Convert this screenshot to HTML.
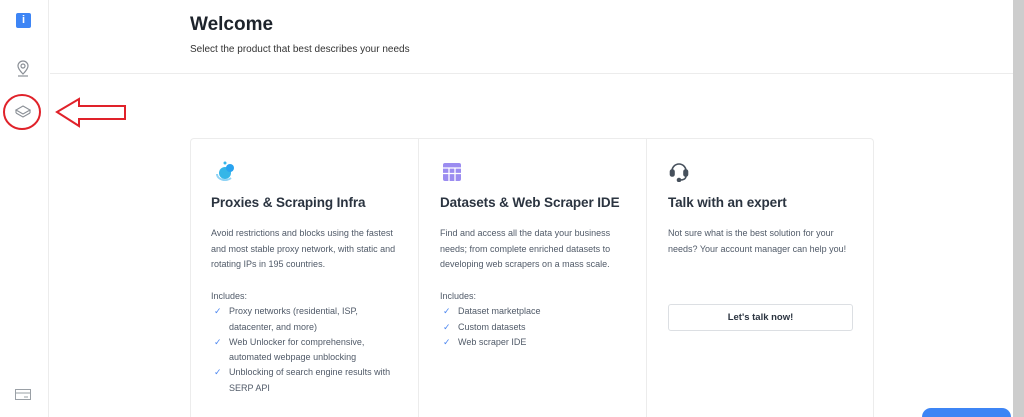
<!DOCTYPE html>
<html><head><meta charset="utf-8"><style>
*{margin:0;padding:0;box-sizing:border-box}
html{width:1024px;height:417px;overflow:hidden}
body{width:1024px;height:417px;overflow:hidden;background:#fff;font-family:"Liberation Sans",sans-serif;position:relative;color:#2b3440}
.abs{position:absolute}
.sb{left:0;top:0;width:49px;height:417px;border-right:1px solid #ececec}
.hline{left:50px;top:73px;width:963px;height:1px;background:#ececec}
.scroll{left:1013px;top:0;width:11px;height:417px;background:#cdcdcd}
.cards{left:190px;top:138px;width:684px;height:279px;border:1px solid #ececec;border-bottom:none;border-radius:4px 4px 0 0}
.div{top:138px;width:1px;height:279px;background:#ececec}
h3{position:absolute;font-size:13.5px;font-weight:600;color:#2b3440;white-space:nowrap;letter-spacing:-0.1px}
.p{position:absolute;font-size:9px;line-height:15.5px;color:#505a68;white-space:nowrap}
.ck{color:#4b86f0;display:inline-block;width:18px;font-size:9px;padding-left:3px}
</style></head><body>
<div class="abs sb"></div>
<div class="abs" style="left:16px;top:13px;width:15px;height:15px;background:#3d85f5;border-radius:2px;color:#fff;font-size:11px;font-weight:bold;text-align:center;line-height:15px">i</div>
<svg class="abs" style="left:15px;top:60px" width="16" height="18" viewBox="0 0 16 18" fill="none" stroke="#8a8f96" stroke-width="1.2"><path d="M8 14C8 14 3 9 3 6a5 5 0 0 1 10 0c0 3-5 8-5 8z"/><circle cx="8" cy="6" r="2"/><path d="M3 16h10"/></svg>
<svg class="abs" style="left:14px;top:104px" width="18" height="18" viewBox="0 0 18 18" fill="none" stroke="#8a8f96" stroke-width="1.1"><path d="M9 2L16 6 9 10 2 6z"/><path d="M2 9l7 4 7-4"/><path d="M2 6v3M16 6v3"/></svg>
<svg class="abs" style="left:0;top:90px" width="130" height="44"><ellipse cx="22" cy="22" rx="18" ry="17" fill="none" stroke="#e0222a" stroke-width="2"/><path d="M57 22L79 9v7h46v13H79v7z" fill="none" stroke="#e0222a" stroke-width="2"/></svg>
<svg class="abs" style="left:15px;top:389px" width="16" height="12"><rect x="0.5" y="0.5" width="15" height="10" fill="none" stroke="#9aa0a6"/><path d="M1 4h14M9 8h4" stroke="#9aa0a6"/></svg>
<div class="abs hline"></div>
<div class="abs" style="left:190px;top:14px;font-size:19px;font-weight:bold;color:#1d232b">Welcome</div>
<div class="abs" style="left:190px;top:44px;font-size:10px;color:#333">Select the product that best describes your needs</div>
<div class="abs cards"></div>
<div class="abs div" style="left:418px"></div>
<div class="abs div" style="left:646px"></div>
<svg class="abs" style="left:214px;top:160px" width="22" height="22"><circle cx="11" cy="13" r="6" fill="#35b6e8"/><circle cx="16" cy="8" r="4" fill="#29a3f0"/><circle cx="11" cy="3" r="1.5" fill="#35b6e8"/><path d="M3 14a8 6 0 0 0 14 4" stroke="#8fd3f5" stroke-width="2" fill="none"/></svg>
<svg class="abs" style="left:443px;top:163px" width="18" height="18"><rect x="0" y="0" width="18" height="18" rx="2" fill="#9b8cf0"/><path d="M0 5h18M0 10.5h18M6 5v13M12 5v13" stroke="#fff" stroke-width="1.3"/></svg>
<svg class="abs" style="left:668px;top:160px" width="22" height="22" fill="none" stroke="#46505c" stroke-width="1.6"><path d="M4 11a7 7 0 0 1 14 0"/><rect x="2.5" y="10" width="3.5" height="6" rx="1.5" fill="#46505c"/><rect x="16" y="10" width="3.5" height="6" rx="1.5" fill="#46505c"/><path d="M18 16c0 3-3 4-6 4"/><circle cx="11" cy="20" r="1.5" fill="#46505c"/></svg>
<h3 style="left:211px;top:195px">Proxies &amp; Scraping Infra</h3>
<h3 style="left:440px;top:195px">Datasets &amp; Web Scraper IDE</h3>
<h3 style="left:668px;top:195px">Talk with an expert</h3>
<div class="p" style="left:211px;top:226px">Avoid restrictions and blocks using the fastest<br>and most stable proxy network, with static and<br>rotating IPs in 195 countries.</div>
<div class="p" style="left:440px;top:226px">Find and access all the data your business<br>needs; from complete enriched datasets to<br>developing web scrapers on a mass scale.</div>
<div class="p" style="left:668px;top:226px">Not sure what is the best solution for your<br>needs? Your account manager can help you!</div>
<div class="p" style="left:211px;top:289px;line-height:15.3px">Includes:<br><span class="ck">✓</span>Proxy networks (residential, ISP,<br><span class="ck"></span>datacenter, and more)<br><span class="ck">✓</span>Web Unlocker for comprehensive,<br><span class="ck"></span>automated webpage unblocking<br><span class="ck">✓</span>Unblocking of search engine results with<br><span class="ck"></span>SERP API</div>
<div class="p" style="left:440px;top:289px;line-height:15.3px">Includes:<br><span class="ck">✓</span>Dataset marketplace<br><span class="ck">✓</span>Custom datasets<br><span class="ck">✓</span>Web scraper IDE</div>
<div class="abs" style="left:668px;top:304px;width:185px;height:27px;border:1px solid #dcdfe3;border-radius:3px;font-size:9.5px;font-weight:bold;color:#2b3440;text-align:center;line-height:25px">Let's talk now!</div>
<div class="abs" style="left:922px;top:408px;width:89px;height:9px;background:#3d85f5;border-radius:10px 10px 0 0"></div>
<div class="abs scroll"></div>
</body></html>
